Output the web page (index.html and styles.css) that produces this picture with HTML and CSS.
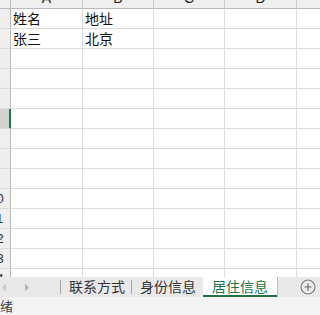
FILE: index.html
```html
<!DOCTYPE html>
<html lang="zh-CN">
<head>
  <meta charset="UTF-8" />
  <title>居住信息</title>
  <link rel="stylesheet" href="styles.css">
</head>
<body>
  <div class="grid-wrap">
    <div class="sheet">
      <div class="row head">
        <div class="rh"></div>
        <div class="ch">A</div><div class="ch w71">B</div><div class="ch w71">C</div><div class="ch">D</div><div class="ch">E</div>
      </div>
      <div class="row"><div class="rh">1</div><div class="c">姓名</div><div class="c w71">地址</div><div class="c w71"></div><div class="c"></div><div class="c"></div></div>
      <div class="row"><div class="rh">2</div><div class="c">张三</div><div class="c w71">北京</div><div class="c w71"></div><div class="c"></div><div class="c"></div></div>
      <div class="row"><div class="rh">3</div><div class="c"></div><div class="c w71"></div><div class="c w71"></div><div class="c"></div><div class="c"></div></div>
      <div class="row"><div class="rh">4</div><div class="c"></div><div class="c w71"></div><div class="c w71"></div><div class="c"></div><div class="c"></div></div>
      <div class="row"><div class="rh">5</div><div class="c"></div><div class="c w71"></div><div class="c w71"></div><div class="c"></div><div class="c"></div></div>
      <div class="row"><div class="rh sel">6</div><div class="c"></div><div class="c w71"></div><div class="c w71"></div><div class="c"></div><div class="c"></div></div>
      <div class="row"><div class="rh">7</div><div class="c"></div><div class="c w71"></div><div class="c w71"></div><div class="c"></div><div class="c"></div></div>
      <div class="row"><div class="rh">8</div><div class="c"></div><div class="c w71"></div><div class="c w71"></div><div class="c"></div><div class="c"></div></div>
      <div class="row"><div class="rh">9</div><div class="c"></div><div class="c w71"></div><div class="c w71"></div><div class="c"></div><div class="c"></div></div>
      <div class="row"><div class="rh">10</div><div class="c"></div><div class="c w71"></div><div class="c w71"></div><div class="c"></div><div class="c"></div></div>
      <div class="row"><div class="rh">11</div><div class="c"></div><div class="c w71"></div><div class="c w71"></div><div class="c"></div><div class="c"></div></div>
      <div class="row"><div class="rh">12</div><div class="c"></div><div class="c w71"></div><div class="c w71"></div><div class="c"></div><div class="c"></div></div>
      <div class="row"><div class="rh">13</div><div class="c"></div><div class="c w71"></div><div class="c w71"></div><div class="c"></div><div class="c"></div></div>
      <div class="row"><div class="rh">14</div><div class="c"></div><div class="c w71"></div><div class="c w71"></div><div class="c"></div><div class="c"></div></div>
    </div>
  </div>

  <div class="tabbar">
    <div class="nav">
      <svg width="6" height="9" viewBox="0 0 6 9"><polygon points="5,0.5 5,8.5 1,4.5" fill="#c9c9c9"/></svg>
      <svg width="6" height="9" viewBox="0 0 6 9"><polygon points="1,0.5 1,8.5 5,4.5" fill="#b5b5b5"/></svg>
    </div>
    <div class="sep"></div>
    <div class="tab">联系方式</div>
    <div class="sep"></div>
    <div class="tab">身份信息</div>
    <div class="tab active">居住信息</div>
    <div class="spacer"></div>
    <svg class="add" width="16" height="16" viewBox="0 0 16 16">
      <circle cx="8" cy="8" r="7" fill="none" stroke="#7a7a7a" stroke-width="1.1"/>
      <path d="M8 4.5v7M4.5 8h7" stroke="#6a6a6a" stroke-width="1.2"/>
    </svg>
  </div>

  <div class="status"><span>就绪</span></div>
</body>
</html>
```

FILE: styles.css
```css
html, body {
  margin: 0;
  padding: 0;
  width: 320px;
  height: 315px;
  overflow: hidden;
  background: #fff;
  font-family: "Noto Sans CJK SC", "Liberation Sans", sans-serif;
}
body {
  display: flex;
  flex-direction: column;
}
.grid-wrap {
  flex: 1;
  overflow: hidden;
}
.sheet {
  margin: -11px 0 0 -19px;
}
.row {
  display: flex;
  height: 20px;
}
.row > div {
  box-sizing: border-box;
  flex: none;
  height: 20px;
  border-bottom: 1px solid #dcdcdc;
  border-right: 1px solid #dcdcdc;
}
.rh {
  width: 30px;
  padding-left: 2px;
  background: #efefef;
  border-right-color: #b9b9b9 !important;
  color: #333;
  font: 13px/19px "Liberation Sans", sans-serif;
  text-align: center;
}
.rh.sel {
  background: #d3d3d3;
  box-shadow: inset -1px 0 #217346;
  border-right-color: #217346 !important;
}
.head > div {
  background: #efefef;
  border-bottom: 1px solid #b9b9b9;
  border-right-color: #cbcbcb;
}
.ch {
  width: 72px;
  text-align: center;
  color: #222;
  font: 14px/19px "Liberation Sans", sans-serif;
}
.c {
  width: 72px;
  padding-left: 2px;
  font-size: 14px;
  line-height: 19px;
  color: #111;
}
.row > .w71 {
  width: 71px;
}

.tabbar {
  flex: none;
  height: 20px;
  display: flex;
  align-items: stretch;
  background: #e9e9e9;
}
.nav {
  width: 60px;
  display: flex;
  align-items: center;
  gap: 17px;
  padding-left: 1px;
  box-sizing: border-box;
}
.sep {
  width: 1px;
  height: 14px;
  align-self: center;
  background: #a6a6a6;
}
.tab {
  padding: 0 6px 0 8px;
  font-size: 14px;
  line-height: 19px;
  color: #333;
}
.tab.active {
  margin-left: 1px;
  padding: 0 9px;
  background: #fff;
  color: #217346;
  border-bottom: 2px solid #217346;
  box-shadow: 1px 0 0 #bcbcbc;
  line-height: 18px;
}
.spacer {
  flex: 1;
}
.add {
  align-self: center;
  margin-right: 4px;
}

.status {
  flex: none;
  height: 18px;
  background: #f3f3f3;
  overflow: hidden;
}
.status span {
  display: block;
  margin-left: -13px;
  font-size: 13px;
  line-height: 18px;
  color: #444;
}
```
